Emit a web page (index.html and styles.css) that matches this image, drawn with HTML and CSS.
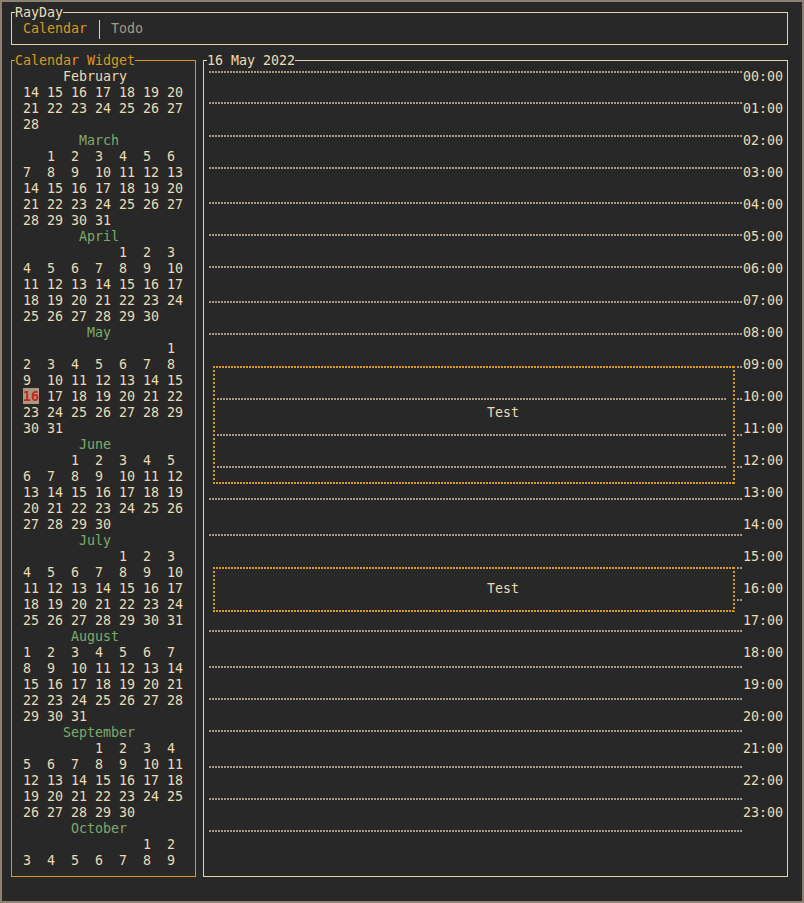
FILE: index.html
```html
<!DOCTYPE html>
<html lang="en">
<head>
<meta charset="utf-8">
<title>RayDay</title>
<link rel="stylesheet" href="styles.css">
</head>
<body>
<div class="screen">
  <div class="box header">
    <span class="title">RayDay</span>
    <div class="tabs">
      <span class="tab-active">Calendar</span>
      <span class="sep"></span>
      <span class="tab">Todo</span>
    </div>
  </div>
  <div class="main">
    <div class="box calendar">
      <span class="title">Calendar Widget</span>
<pre class="cal">      February
 14 15 16 17 18 19 20
 21 22 23 24 25 26 27
 28
        <span class="m">March</span>
    1  2  3  4  5  6
 7  8  9  10 11 12 13
 14 15 16 17 18 19 20
 21 22 23 24 25 26 27
 28 29 30 31
        <span class="m">April</span>
             1  2  3
 4  5  6  7  8  9  10
 11 12 13 14 15 16 17
 18 19 20 21 22 23 24
 25 26 27 28 29 30
         <span class="m">May</span>
                   1
 2  3  4  5  6  7  8
 9  10 11 12 13 14 15
 <span class="today">16</span> 17 18 19 20 21 22
 23 24 25 26 27 28 29
 30 31
        <span class="m">June</span>
       1  2  3  4  5
 6  7  8  9  10 11 12
 13 14 15 16 17 18 19
 20 21 22 23 24 25 26
 27 28 29 30
        <span class="m">July</span>
             1  2  3
 4  5  6  7  8  9  10
 11 12 13 14 15 16 17
 18 19 20 21 22 23 24
 25 26 27 28 29 30 31
       <span class="m">August</span>
 1  2  3  4  5  6  7
 8  9  10 11 12 13 14
 15 16 17 18 19 20 21
 22 23 24 25 26 27 28
 29 30 31
      <span class="m">September</span>
          1  2  3  4
 5  6  7  8  9  10 11
 12 13 14 15 16 17 18
 19 20 21 22 23 24 25
 26 27 28 29 30
       <span class="m">October</span>
                1  2
 3  4  5  6  7  8  9</pre>
    </div>
    <div class="box day">
      <span class="title">16 May 2022</span>
      <div class="canvas">
        <div class="hline full" style="top:10px"></div>
        <div class="hline full" style="top:41px"></div>
        <div class="hline full" style="top:74px"></div>
        <div class="hline full" style="top:106px"></div>
        <div class="hline full" style="top:141px"></div>
        <div class="hline full" style="top:173px"></div>
        <div class="hline full" style="top:205px"></div>
        <div class="hline full" style="top:240px"></div>
        <div class="hline full" style="top:272px"></div>
        <div class="hline tail" style="top:305px"></div>
        <div class="hline inner" style="top:337px"></div>
        <div class="hline tail" style="top:337px"></div>
        <div class="hline inner" style="top:373px"></div>
        <div class="hline tail" style="top:373px"></div>
        <div class="hline inner" style="top:405px"></div>
        <div class="hline tail" style="top:405px"></div>
        <div class="hline full" style="top:437px"></div>
        <div class="hline full" style="top:473px"></div>
        <div class="hline tail" style="top:506px"></div>
        <div class="hline tail" style="top:538px"></div>
        <div class="hline full" style="top:569px"></div>
        <div class="hline full" style="top:605px"></div>
        <div class="hline full" style="top:637px"></div>
        <div class="hline full" style="top:669px"></div>
        <div class="hline full" style="top:705px"></div>
        <div class="hline full" style="top:737px"></div>
        <div class="hline full" style="top:769px"></div>
        <div class="event" style="top:305px;height:118px"><span class="event-name ev-long">Test</span></div>
        <div class="event" style="top:506px;height:45px"><span class="event-name ev-short">Test</span></div>
      </div>
      <div class="hours">
        <div class="hour">00:00</div>
        <div class="hour">01:00</div>
        <div class="hour">02:00</div>
        <div class="hour">03:00</div>
        <div class="hour">04:00</div>
        <div class="hour">05:00</div>
        <div class="hour">06:00</div>
        <div class="hour">07:00</div>
        <div class="hour">08:00</div>
        <div class="hour">09:00</div>
        <div class="hour">10:00</div>
        <div class="hour">11:00</div>
        <div class="hour">12:00</div>
        <div class="hour">13:00</div>
        <div class="hour">14:00</div>
        <div class="hour">15:00</div>
        <div class="hour">16:00</div>
        <div class="hour">17:00</div>
        <div class="hour">18:00</div>
        <div class="hour">19:00</div>
        <div class="hour">20:00</div>
        <div class="hour">21:00</div>
        <div class="hour">22:00</div>
        <div class="hour">23:00</div>
      </div>
    </div>
  </div>
</div>
</body>
</html>
```
FILE: styles.css
```css
html, body {
  margin: 0;
  padding: 0;
}

body {
  background: #8f8172;
  font-family: "DejaVu Sans Mono", "Liberation Mono", monospace;
  font-size: 13.3px;
  line-height: 16px;
  color: #ebdbb2;
}

.screen {
  margin: 2px;
  width: 800px;
  height: 899px;
  box-sizing: border-box;
  padding: 10px 0 0 9px;
  background: #282828;
}

.box {
  position: relative;
  box-sizing: border-box;
  border: 1px solid #e3d2aa;
}

.title {
  position: absolute;
  left: 3px;
  top: -8px;
  height: 15px;
  background: #282828;
  white-space: pre;
}

.header {
  width: 777px;
  height: 33px;
  padding: 7px 0 0 11px;
}

.tabs {
  display: flex;
  align-items: flex-start;
}

.tab-active,
.tab {
  padding-top: 1px;
}

.tab-active {
  color: #d79921;
}

.sep {
  width: 1px;
  height: 19px;
  margin: 0 11px 0 12px;
  background: #e3d2aa;
}

.tab {
  color: #a89984;
}

.main {
  display: flex;
  gap: 7px;
  margin-top: 15px;
}

.calendar {
  width: 185px;
  height: 817px;
  padding: 8px 0 0 3px;
  border-color: #d79921;
}

.calendar .title {
  color: #d79921;
}

.cal {
  margin: 0;
  font: inherit;
  line-height: 16px;
  white-space: pre;
}

.m {
  color: #7daa6a;
}

.today {
  display: inline-block;
  height: 16px;
  margin-top: -1px;
  padding-top: 1px;
  vertical-align: top;
  box-sizing: border-box;
  background: #a89984;
  color: #cc241d;
  font-weight: bold;
}

.day {
  width: 585px;
  height: 817px;
  display: flex;
}

.canvas {
  position: relative;
  width: 539px;
}

.hours {
  width: 40px;
  padding-top: 8px;
}

.hour {
  height: 32px;
}

.hline {
  position: absolute;
  height: 2px;
  background: repeating-linear-gradient(90deg, #a89984 0 2px, transparent 2px 3px);
}

.hline.full {
  left: 5px;
  width: 534px;
}

.hline.inner {
  left: 13px;
  width: 510px;
}

.hline.tail {
  left: 533px;
  width: 6px;
}

.event {
  position: absolute;
  left: 9px;
  width: 522px;
  box-sizing: border-box;
  background:
    repeating-linear-gradient(90deg, #d79921 0 2px, transparent 2px 3px) left top / 100% 2px no-repeat,
    repeating-linear-gradient(90deg, #d79921 0 2px, transparent 2px 3px) left bottom / 100% 2px no-repeat,
    repeating-linear-gradient(180deg, #d79921 0 2px, transparent 2px 4px) left top / 2px 100% no-repeat,
    repeating-linear-gradient(180deg, #d79921 0 2px, transparent 2px 4px) right top / 2px 100% no-repeat;
}

.event-name {
  display: block;
  padding-left: 274px;
}

.ev-long {
  padding-top: 39px;
}

.ev-short {
  padding-top: 14px;
}
```
